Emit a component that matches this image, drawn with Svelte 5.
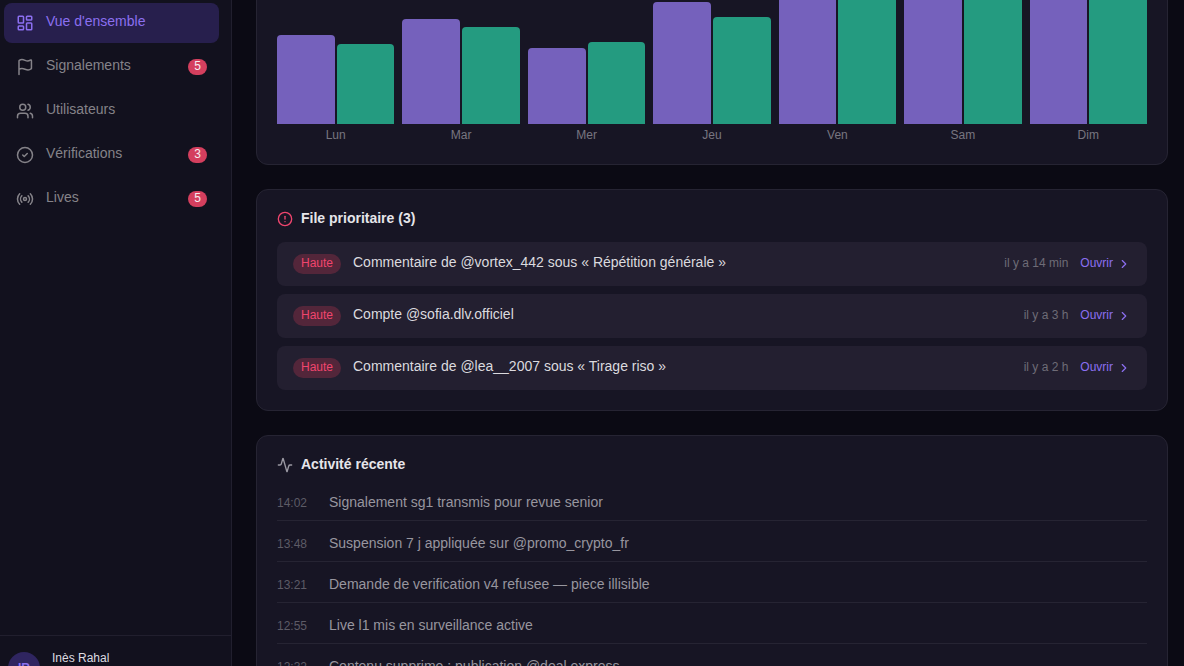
<script>
	const nav = [
		{ label: "Vue d'ensemble", icon: 'grid', active: true },
		{ label: 'Signalements', icon: 'flag', count: 5 },
		{ label: 'Utilisateurs', icon: 'users' },
		{ label: 'Vérifications', icon: 'check', count: 3 },
		{ label: 'Lives', icon: 'radio', count: 5 }
	];

	const days = [
		{ day: 'Lun', a: 89, b: 80 },
		{ day: 'Mar', a: 105, b: 97 },
		{ day: 'Mer', a: 76, b: 82 },
		{ day: 'Jeu', a: 122, b: 107 },
		{ day: 'Ven', a: 150, b: 135 },
		{ day: 'Sam', a: 165, b: 148 },
		{ day: 'Dim', a: 142, b: 156 }
	];

	const queue = [
		{ text: 'Commentaire de @vortex_442 sous « Répétition générale »', time: 'il y a 14 min' },
		{ text: 'Compte @sofia.dlv.officiel', time: 'il y a 3 h' },
		{ text: 'Commentaire de @lea__2007 sous « Tirage riso »', time: 'il y a 2 h' }
	];

	const activity = [
		{ time: '14:02', text: 'Signalement sg1 transmis pour revue senior' },
		{ time: '13:48', text: 'Suspension 7 j appliquée sur @promo_crypto_fr' },
		{ time: '13:21', text: 'Demande de verification v4 refusee — piece illisible' },
		{ time: '12:55', text: 'Live l1 mis en surveillance active' },
		{ time: '12:32', text: 'Contenu supprime : publication @deal.express' }
	];
</script>

<div class="shell">
	<aside class="sidebar">
		<nav class="nav">
			{#each nav as item}
				<div class="nav-item" class:active={item.active}>
					<svg class="nav-icon" viewBox="0 0 24 24" fill="none" stroke="currentColor" stroke-width="2" stroke-linecap="round" stroke-linejoin="round">
						{#if item.icon === 'grid'}
							<rect x="3" y="3" width="7" height="9" rx="1" />
							<rect x="14" y="3" width="7" height="5" rx="1" />
							<rect x="14" y="12" width="7" height="9" rx="1" />
							<rect x="3" y="16" width="7" height="5" rx="1" />
						{:else if item.icon === 'flag'}
							<path d="M4 22V4a1 1 0 0 1 .4-.8A6 6 0 0 1 8 2c3 0 5 2 7.33 2q2 0 3.67-1.2a1 1 0 0 1 1.6.8v10a1 1 0 0 1-.4.8A6 6 0 0 1 16 16c-3 0-5-2-8-2a8 8 0 0 0-4 1" />
						{:else if item.icon === 'users'}
							<path d="M16 21v-2a4 4 0 0 0-4-4H6a4 4 0 0 0-4 4v2" />
							<path d="M16 3.13a4 4 0 0 1 0 7.75" />
							<path d="M22 21v-2a4 4 0 0 0-3-3.87" />
							<circle cx="9" cy="7" r="4" />
						{:else if item.icon === 'check'}
							<circle cx="12" cy="12" r="10" />
							<path d="m9 12 2 2 4-4" />
						{:else}
							<path d="M4.9 19.1C1 15.2 1 8.8 4.9 4.9" />
							<path d="M7.8 16.2c-2.3-2.3-2.3-6.1 0-8.5" />
							<circle cx="12" cy="12" r="2" />
							<path d="M16.2 7.8c2.3 2.3 2.3 6.1 0 8.5" />
							<path d="M19.1 4.9C23 8.8 23 15.1 19.1 19" />
						{/if}
					</svg>
					<span class="nav-label">{item.label}</span>
					{#if item.count}<span class="count">{item.count}</span>{/if}
				</div>
			{/each}
		</nav>
		<div class="profile">
			<div class="avatar">IR</div>
			<div class="who">
				<div class="who-name">Inès Rahal</div>
				<div class="who-role">Modératrice</div>
			</div>
		</div>
	</aside>

	<main class="main">
		<section class="card chart-card">
			<div class="chart">
				{#each days as d}
					<div class="col">
						<div class="bars">
							<div class="bar violet" style="height: {d.a}px"></div>
							<div class="bar green" style="height: {d.b}px"></div>
						</div>
						<span class="day">{d.day}</span>
					</div>
				{/each}
			</div>
		</section>

		<section class="card">
			<h2 class="card-title">
				<svg class="title-icon alert" viewBox="0 0 24 24" fill="none" stroke="currentColor" stroke-width="2" stroke-linecap="round" stroke-linejoin="round">
					<circle cx="12" cy="12" r="10" />
					<path d="M12 8v4" />
					<path d="M12 16h.01" />
				</svg>
				File prioritaire (3)
			</h2>
			<div class="queue">
				{#each queue as q}
					<div class="queue-row">
						<span class="tag">Haute</span>
						<span class="queue-text">{q.text}</span>
						<span class="queue-time">{q.time}</span>
						<span class="open">Ouvrir</span>
						<svg class="chev" viewBox="0 0 24 24" fill="none" stroke="currentColor" stroke-width="2" stroke-linecap="round" stroke-linejoin="round">
							<path d="m9 18 6-6-6-6" />
						</svg>
					</div>
				{/each}
			</div>
		</section>

		<section class="card">
			<h2 class="card-title activity-title">
				<svg class="title-icon pulse" viewBox="0 0 24 24" fill="none" stroke="currentColor" stroke-width="2" stroke-linecap="round" stroke-linejoin="round">
					<path d="M22 12h-2.48a2 2 0 0 0-1.93 1.46l-2.35 8.36a.25.25 0 0 1-.48 0L9.24 2.18a.25.25 0 0 0-.48 0l-2.35 8.36A2 2 0 0 1 4.49 12H2" />
				</svg>
				Activité récente
			</h2>
			<div class="log">
				{#each activity as a}
					<div class="log-row">
						<span class="log-time">{a.time}</span>
						<span class="log-text">{a.text}</span>
					</div>
				{/each}
			</div>
		</section>
	</main>
</div>

<style>
	:global(body) {
		margin: 0;
		background: #0b0a14;
		font-family: 'Liberation Sans', Arial, sans-serif;
	}
	.shell {
		display: flex;
		height: 666px;
		overflow: hidden;
	}
	.sidebar {
		width: 231px;
		flex: none;
		height: 666px;
		background: #12111e;
		border-right: 1px solid #211f2e;
		display: flex;
		flex-direction: column;
	}
	.nav {
		flex: 1;
		padding: 3px 12px 0 4px;
		display: flex;
		flex-direction: column;
		gap: 4px;
	}
	.nav-item {
		height: 40px;
		display: flex;
		align-items: center;
		padding: 0 12px;
		gap: 12px;
		border-radius: 8px;
		color: #858389;
		font-size: 14px;
	}
	.nav-item.active {
		background: #271f4d;
		color: #8b6ff0;
	}
	.nav-icon {
		width: 18px;
		height: 18px;
		flex: none;
	}
	.nav-label {
		flex: 1;
		padding-bottom: 4px;
	}
	.count {
		width: 19px;
		height: 16px;
		border-radius: 8px;
		background: #d43f5e;
		color: #f6ecef;
		font-size: 12px;
		line-height: 15px;
		text-align: center;
	}
	.profile {
		height: 14px;
		flex: none;
		border-top: 1px solid #211f2e;
		padding: 16px 8px 0;
		display: flex;
		gap: 12px;
	}
	.avatar {
		width: 32px;
		height: 32px;
		flex: none;
		border-radius: 50%;
		background: #2f2560;
		color: #8b6ff0;
		font-size: 12px;
		font-weight: 700;
		line-height: 32px;
		text-align: center;
	}
	.who-name {
		font-size: 12px;
		line-height: 12px;
		color: #dddce1;
	}
	.who-role {
		font-size: 11px;
		color: #777580;
	}
	.main {
		flex: 1;
		min-width: 0;
		padding: 0 16px 0 24px;
		display: flex;
		flex-direction: column;
		gap: 24px;
	}
	.card {
		flex: none;
		background: #171524;
		border: 1px solid #262433;
		border-radius: 12px;
		padding: 20px;
	}
	.chart-card {
		margin-top: -18px;
		height: 183px;
		box-sizing: border-box;
		padding-top: 0;
		padding-bottom: 22px;
		display: flex;
		flex-direction: column;
		justify-content: flex-end;
	}
	.chart {
		display: flex;
		gap: 8px;
		align-items: flex-end;
	}
	.col {
		flex: 1;
		min-width: 0;
		display: flex;
		flex-direction: column;
		align-items: stretch;
	}
	.bars {
		display: flex;
		gap: 2px;
		align-items: flex-end;
		height: 124px;
	}
	.bar {
		flex: 1;
		border-radius: 4px 4px 0 0;
	}
	.violet {
		background: #7561bc;
	}
	.green {
		background: #249b80;
	}
	.day {
		margin-top: 4px;
		font-size: 12px;
		line-height: 14px;
		text-align: center;
		color: #777580;
	}
	.card-title {
		margin: 0 0 16px;
		height: 16px;
		display: flex;
		align-items: center;
		gap: 8px;
		font-size: 14px;
		font-weight: 700;
		line-height: 16px;
		color: #e6e5ea;
	}
	.title-icon {
		width: 16px;
		height: 16px;
		flex: none;
		margin-top: 2px;
	}
	.alert {
		color: #f0456e;
	}
	.pulse {
		color: #9a98a2;
	}
	.queue {
		display: flex;
		flex-direction: column;
		gap: 8px;
	}
	.queue-row {
		height: 44px;
		display: flex;
		align-items: center;
		padding: 0 16px;
		gap: 12px;
		border-radius: 8px;
		background: #231f30;
	}
	.tag {
		height: 20px;
		width: 48px;
		flex: none;
		border-radius: 10px;
		background: #53263a;
		color: #f0456e;
		font-size: 12px;
		line-height: 18px;
		text-align: center;
	}
	.queue-text {
		flex: 1;
		min-width: 0;
		font-size: 14px;
		color: #dbdadf;
		padding-bottom: 4px;
	}
	.queue-time {
		font-size: 12px;
		color: #6e6c77;
		padding-bottom: 2px;
	}
	.open {
		font-size: 12px;
		color: #8b6ff0;
		padding-bottom: 2px;
	}
	.chev {
		width: 14px;
		height: 14px;
		flex: none;
		color: #8b6ff0;
		margin-left: -8px;
	}
	.activity-title {
		margin-bottom: 8px;
	}
	.log-row {
		box-sizing: border-box;
		height: 41px;
		padding-top: 14px;
		display: flex;
		align-items: baseline;
		gap: 22px;
		border-bottom: 1px solid #262433;
	}
	.log-time {
		width: 30px;
		flex: none;
		font-size: 12px;
		color: #5d5b66;
	}
	.log-text {
		font-size: 14px;
		color: #98969f;
	}
</style>
